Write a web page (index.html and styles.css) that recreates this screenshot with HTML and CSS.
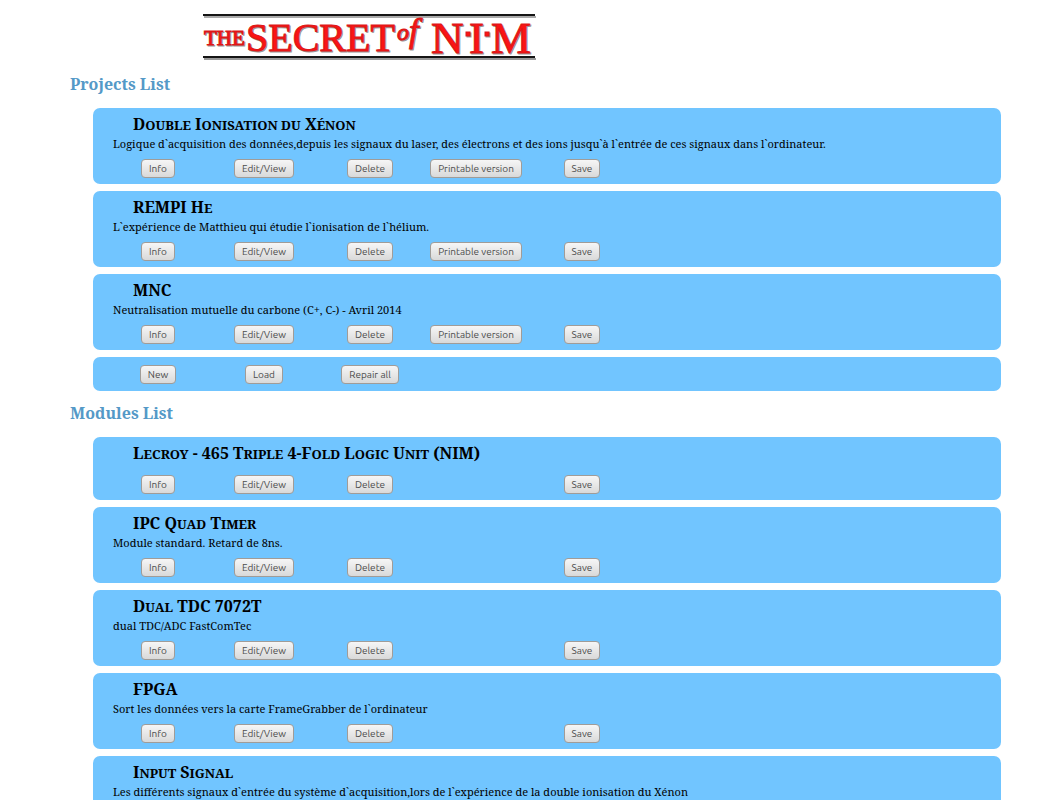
FILE: index.html
```
<!DOCTYPE html>
<html lang="fr">
<head>
    <meta charset="UTF-8">
    <meta name="viewport" content="width=device-width, initial-scale=1.0">
    <title>The Secret of N.I.M</title>
    <link rel="stylesheet" href="styles.css">
</head>
<body>
    <header class="banner">
        <svg class="logo" width="332" height="49" viewBox="0 0 332 49" role="img" aria-label="The Secret of N.I.M">
            <!-- Rules above and below the title -->
            <rect x="1" y="3" width="332" height="2" fill="#aaa"/>
            <rect x="0" y="1" width="332" height="2" fill="#151515"/>
            <rect x="1" y="45" width="332" height="2" fill="#999"/>
            <rect x="0" y="43" width="332" height="2" fill="#151515"/>
            <g class="logo-shadow">
                <text x="2" y="33" font-size="21">THE</text>
                <text x="44" y="39" font-size="40">SECRET</text>
                <text x="195" y="28" font-size="24" font-style="italic">o<tspan dy="2" font-size="34">f</tspan></text>
                <text x="229" y="41" font-size="45">N</text>
                <text x="267" y="41" font-size="45">I</text>
                <text x="289" y="41" font-size="45">M</text>
                <rect x="264" y="20" width="4" height="4"/>
                <rect x="283" y="20" width="4" height="4"/>
            </g>
            <g class="logo-text">
                <text x="1" y="32" font-size="21">THE</text>
                <text x="43" y="38" font-size="40">SECRET</text>
                <text x="194" y="27" font-size="24" font-style="italic">o<tspan dy="2" font-size="34">f</tspan></text>
                <text x="228" y="40" font-size="45">N</text>
                <text x="266" y="40" font-size="45">I</text>
                <text x="288" y="40" font-size="45">M</text>
                <rect x="263" y="19" width="4" height="4"/>
                <rect x="282" y="19" width="4" height="4"/>
            </g>
        </svg>
    </header>

    <main>
        <h2>Projects List</h2>
        <section class="list">
            <article class="item">
                <h3>D<small>ouble</small> I<small>onisation du</small> X<small>énon</small></h3>
                <p>Logique d`acquisition des données,depuis les signaux du laser, des électrons et des ions jusqu`à l`entrée de ces signaux dans l`ordinateur.</p>
                <div class="actions">
                    <button type="button">Info</button>
                    <button type="button">Edit/View</button>
                    <button type="button">Delete</button>
                    <button type="button">Printable version</button>
                    <button type="button" class="save">Save</button>
                </div>
            </article>
            <article class="item">
                <h3>REMPI H<small>e</small></h3>
                <p>L`expérience de Matthieu qui étudie l`ionisation de l`hélium.</p>
                <div class="actions">
                    <button type="button">Info</button>
                    <button type="button">Edit/View</button>
                    <button type="button">Delete</button>
                    <button type="button">Printable version</button>
                    <button type="button" class="save">Save</button>
                </div>
            </article>
            <article class="item">
                <h3>MNC</h3>
                <p>Neutralisation mutuelle du carbone (C+, C-) - Avril 2014</p>
                <div class="actions">
                    <button type="button">Info</button>
                    <button type="button">Edit/View</button>
                    <button type="button">Delete</button>
                    <button type="button">Printable version</button>
                    <button type="button" class="save">Save</button>
                </div>
            </article>
            <div class="item tools">
                <div class="actions">
                    <button type="button">New</button>
                    <button type="button">Load</button>
                    <button type="button">Repair all</button>
                </div>
            </div>
        </section>

        <h2>Modules List</h2>
        <section class="list">
            <article class="item no-text">
                <h3>L<small>ecroy</small> - 465 T<small>riple</small> 4-F<small>old</small> L<small>ogic</small> U<small>nit</small> (NIM)</h3>
                <div class="actions">
                    <button type="button">Info</button>
                    <button type="button">Edit/View</button>
                    <button type="button">Delete</button>
                    <button type="button" class="save">Save</button>
                </div>
            </article>
            <article class="item">
                <h3>IPC Q<small>uad</small> T<small>imer</small></h3>
                <p>Module standard. Retard de 8ns.</p>
                <div class="actions">
                    <button type="button">Info</button>
                    <button type="button">Edit/View</button>
                    <button type="button">Delete</button>
                    <button type="button" class="save">Save</button>
                </div>
            </article>
            <article class="item">
                <h3>D<small>ual</small> TDC 7072T</h3>
                <p>dual TDC/ADC FastComTec</p>
                <div class="actions">
                    <button type="button">Info</button>
                    <button type="button">Edit/View</button>
                    <button type="button">Delete</button>
                    <button type="button" class="save">Save</button>
                </div>
            </article>
            <article class="item">
                <h3>FPGA</h3>
                <p>Sort les données vers la carte FrameGrabber de l`ordinateur</p>
                <div class="actions">
                    <button type="button">Info</button>
                    <button type="button">Edit/View</button>
                    <button type="button">Delete</button>
                    <button type="button" class="save">Save</button>
                </div>
            </article>
            <article class="item">
                <h3>I<small>nput</small> S<small>ignal</small></h3>
                <p>Les différents signaux d`entrée du système d`acquisition,lors de l`expérience de la double ionisation du Xénon</p>
            </article>
        </section>
    </main>
</body>
</html>
```

FILE: styles.css
```
body {
    margin: 0;
    padding: 13px 44px 0 70px;
    background: #fff;
    color: #000;
    font-family: "Droid Serif", "Noto Serif", "DejaVu Serif Condensed", "DejaVu Serif", serif;
    font-size: 11px;
}
.banner {
    max-width: 598px;
    text-align: center;
}
.logo {
    display: block;
    margin: 0 auto;
    overflow: visible;
}
.logo text {
    font-family: "Liberation Serif", serif;
}
.logo-text {
    fill: #fb1414;
    stroke: #dc1818;
    stroke-width: 1;
}
.logo-shadow {
    fill: #999;
    stroke: #999;
    stroke-width: 1;
}
h2 {
    margin: 0;
    padding: 11px 0 13px;
    color: #5499c7;
    font-size: 16px;
    line-height: 22px;
}
.list {
    display: flex;
    flex-direction: column;
    gap: 7px;
    margin-left: 23px;
}
.item {
    padding: 5px 12px 6px;
    border-radius: 7px;
    background: #71c5ff;
}
.item h3 {
    margin: 0 0 0 28px;
    font-size: 16px;
    line-height: 22px;
}
/* Small capitals */
.item h3 small {
    font-size: 13px;
    line-height: 1;
    text-transform: uppercase;
}
.item p {
    margin: 0 0 6px 8px;
    line-height: 18px;
}
.item.no-text h3 {
    margin-bottom: 11px;
}
.item.tools {
    padding: 8px 12px 7px;
}
/* One column per action, Save always in the fifth */
.actions {
    display: grid;
    grid-template-columns: repeat(5, 106px);
    justify-items: center;
}
.save {
    grid-column: 5;
}
button {
    height: 19px;
    padding: 0 7px;
    border: 1px solid #a09c98;
    border-radius: 4px;
    background: linear-gradient(#f6f6f6, #d9d9d9);
    color: #4c4c4c;
    font-family: Ubuntu, "Noto Sans", sans-serif;
    font-size: 10px;
    line-height: 17px;
}
```
